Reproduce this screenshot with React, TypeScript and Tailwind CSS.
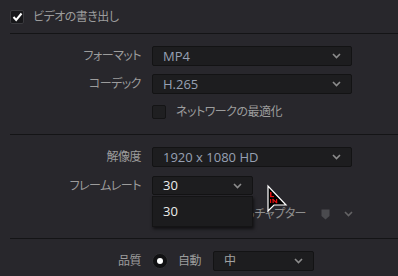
import React from "react";

const font = "font-['Open_Sans','Noto_Sans_CJK_JP',sans-serif] [font-feature-settings:'palt']";
const jp = "text-[12px] tracking-[-0.5px] leading-none";

function Chevron({ className = "" }: { className?: string }) {
  return (
    <svg width="9" height="6" viewBox="0 0 9 6" className={className}>
      <path d="M1 1 L4.5 4.5 L8 1" fill="none" stroke="#8c8c8c" strokeWidth="1.6" />
    </svg>
  );
}

function Select({ value, w, text = "text-[#97a0b3] text-[13px]", h = "h-[20px]" }: { value: string; w: string; text?: string; h?: string }) {
  return (
    <div className={`${w} ${h} flex items-center justify-between bg-[#1d1d1f] border border-[#131314] rounded-[2px] pl-[10px] pr-[10px]`}>
      <span className={`leading-none ${text}`}>{value}</span>
      <Chevron />
    </div>
  );
}

function Row({ label, children, mt }: { label?: string; children: React.ReactNode; mt: string }) {
  return (
    <div className={`flex items-center ${mt}`}>
      <div className={`w-[141px] text-right ${jp} text-[#9c9c9c]`}>{label}</div>
      <div className="ml-[11px] flex items-center">{children}</div>
    </div>
  );
}

export default function App() {
  return (
    <div className={`relative w-[398px] h-[276px] bg-[#28272c] overflow-hidden ${font}`}>
      <div className="flex items-center pl-[10px] pt-[10px]">
        <div className="w-[14px] h-[14px] bg-[#17171a] border border-[#3a3a3e] rounded-[2px] flex items-center justify-center">
          <svg width="11" height="10" viewBox="0 0 11 10">
            <path d="M1.5 5 L4.2 8 L9.5 1.5" fill="none" stroke="#ffffff" strokeWidth="2" />
          </svg>
        </div>
        <span className={`ml-[9px] ${jp} text-[#9c9c9c]`}>ビデオの書き出し</span>
      </div>
      <div className="ml-[10px] mt-[9px] h-px bg-[#141416]" />

      <Row label="フォーマット" mt="mt-[12px]">
        <Select value="MP4" w="w-[200px]" />
      </Row>
      <Row label="コーデック" mt="mt-[8px]">
        <Select value="H.265" w="w-[200px]" />
      </Row>
      <Row mt="mt-[11px]">
        <div className="w-[14px] h-[14px] bg-[#1f1f21] border border-[#141415] rounded-[2px]" />
        <span className={`ml-[10px] ${jp} text-[#9c9c9c]`}>ネットワークの最適化</span>
      </Row>
      <div className="ml-[10px] mt-[15px] h-px bg-[#141416]" />

      <Row label="解像度" mt="mt-[12px]">
        <Select value="1920 x 1080 HD" w="w-[200px]" />
      </Row>
      <Row label="フレームレート" mt="mt-[9px]">
        <Select value="30" w="w-[101px]" h="h-[19px]" text="text-[13px] text-[#ececec]" />
      </Row>
      <Row mt="mt-[13px]">
        <div className="w-[154px] flex justify-end">
          <span className={`${jp} text-[#8f8f8f] whitespace-nowrap`}>マーカーからチャプター</span>
        </div>
        <svg width="9" height="11" viewBox="0 0 9 11" className="ml-[15px]">
          <path d="M0.5 0.5 H8.5 V7 L4.5 10.5 L0.5 7 Z" fill="#4a4a4e" />
        </svg>
        <Chevron className="ml-[14px] opacity-60" />
      </Row>
      <div className="ml-[10px] mt-[18px] h-px bg-[#141416]" />

      <Row label="品質" mt="mt-[12px]">
        <div className="w-[16px] h-[16px] rounded-full bg-[#111113] border border-[#2e2e31] flex items-center justify-center">
          <div className="w-[6px] h-[6px] rounded-full bg-white" />
        </div>
        <span className={`ml-[10px] ${jp} text-[#9c9c9c]`}>自動</span>
        <div className="ml-[12px]">
          <Select value="中" w="w-[101px]" text="text-[12px] text-[#a3a3a3]" />
        </div>
      </Row>

      {/* popup menu */}
      <div className="absolute left-[152px] top-[196px] w-[101px] h-[31px] bg-[#1c1c1e] border border-[#141415] shadow-[1px_2px_3px_rgba(0,0,0,0.6)] flex items-center pl-[10px]">
        <span className="text-[13px] leading-none text-[#ececec]">30</span>
      </div>

      {/* cursor */}
      <svg width="24" height="30" viewBox="0 0 24 30" className="absolute left-[266px] top-[184px]">
        <path d="M2 2 L2 27 L8 21 L20 21 Z" fill="#000000" stroke="#ffffff" strokeWidth="1.2" />
        <rect x="4" y="8" width="1.5" height="5" fill="#e01010" />
        <rect x="4" y="12" width="4" height="1.2" fill="#e01010" />
        <rect x="4" y="15" width="1.2" height="4" fill="#e01010" />
        <rect x="6.5" y="15" width="1.2" height="4" fill="#e01010" />
        <rect x="10" y="15" width="1.2" height="4" fill="#e01010" />
        <path d="M6.5 15 L11 19" stroke="#e01010" strokeWidth="1.2" />
      </svg>
    </div>
  );
}
